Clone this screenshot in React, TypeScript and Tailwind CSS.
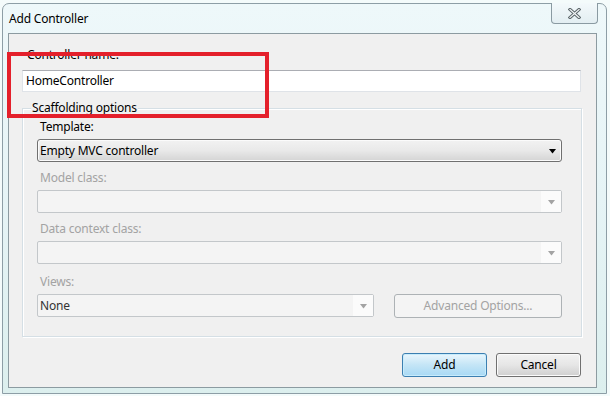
import React from "react";

function Arrow({ color }: { color: string }) {
  return (
    <svg width="7" height="5" viewBox="0 0 7 5">
      <path d="M0 0 H7 L3.5 4.5 Z" fill={color} />
    </svg>
  );
}

function EnabledCombo({ text, w }: { text: string; w: string }) {
  return (
    <div
      className={`${w} h-[23px] rounded-[3px] border border-[#707070] bg-linear-to-b from-[#f2f2f2] via-[#e9e9e9] to-[#d4d4d4] flex items-center shadow-[inset_0_0_0_1px_#fbfbfb]`}
    >
      <span className="pl-[2px] flex-1 text-black">{text}</span>
      <div className="w-[18px] flex items-center justify-center pt-[1px]">
        <Arrow color="#000" />
      </div>
    </div>
  );
}

function DisabledCombo({ text, w }: { text?: string; w: string }) {
  return (
    <div
      className={`${w} h-[23px] rounded-[2px] border border-[#c3c7ca] bg-[#f4f4f4] flex items-stretch`}
    >
      <span className="pl-[2px] flex-1 flex items-center text-[#333]">{text}</span>
      <div className="w-[20px] bg-[#fbfbfb] flex items-center justify-center pt-[1px]">
        <Arrow color="#a3a3a3" />
      </div>
    </div>
  );
}

export default function App() {
  return (
    <div className="relative w-[610px] h-[396px] bg-[#f4fbfb] overflow-hidden font-['Noto_Sans',sans-serif] text-[12px] leading-[16px] tracking-[-0.2px] text-black">
      {/* window */}
      <div className="relative ml-[2px] mt-[3px] w-[605px] h-[391px] rounded-t-[7px] border border-[#8d9ea6] bg-linear-to-b from-[#eef8fa] via-[#e6f4f6] to-[#dcefee] flex flex-col">
        {/* close button */}
        <div className="absolute right-[8px] top-[-1px] w-[47px] h-[21px] rounded-b-[4px] border border-[#8a9aa2] border-t-0 bg-linear-to-b from-[#f3f9fb] to-[#e3eef2] flex items-center justify-center">
          <svg width="13" height="11" viewBox="0 0 13 11">
            <path d="M2 1.5 L11 9.5 M11 1.5 L2 9.5" stroke="#5b6569" strokeWidth="3.2" strokeLinecap="square" />
            <path d="M2 1.5 L11 9.5 M11 1.5 L2 9.5" stroke="#f4f7f8" strokeWidth="1.2" strokeLinecap="square" />
          </svg>
        </div>
        {/* title */}
        <div className="h-[29px] pl-[6px] pt-[7px] text-black">Add Controller</div>
        {/* client area */}
        <div className="ml-[5px] w-[589px] h-[355px] border border-[#8c9ba1] bg-[#f0f0f0] pl-[13px] pt-[13px] flex flex-col">
          <div className="h-[16px] pl-[5px]">Controller name:</div>
          <div className="mt-[7px] w-[559px] h-[22px] bg-white border border-[#dfe3e8] border-t-[#abadb3] flex items-center pl-[3px]">
            HomeController
          </div>
          {/* group box */}
          <div className="relative mt-[16px] w-[560px] h-[229px] border border-[#d5dfe5] shadow-[inset_1px_1px_0_#ffffff,1px_1px_0_#ffffff] pl-[14px] pt-[10px] flex flex-col">
            <div className="absolute left-[8px] top-[-9px] px-[1px] bg-[#f0f0f0] h-[16px]">Scaffolding options</div>
            <div className="h-[16px] pl-[3px]">Template:</div>
            <div className="mt-[4px]">
              <EnabledCombo text="Empty MVC controller" w="w-[525px]" />
            </div>
            <div className="mt-[8px] h-[16px] pl-[3px] text-[#a3a3a3]">Model class:</div>
            <div className="mt-[4px]">
              <DisabledCombo w="w-[525px]" />
            </div>
            <div className="mt-[8px] h-[16px] pl-[3px] text-[#a3a3a3]">Data context class:</div>
            <div className="mt-[4px]">
              <DisabledCombo w="w-[525px]" />
            </div>
            <div className="mt-[10px] h-[16px] pl-[3px] text-[#a3a3a3]">Views:</div>
            <div className="mt-[4px] flex gap-[20px]">
              <DisabledCombo text="None" w="w-[337px]" />
              <div className="w-[168px] h-[24px] rounded-[3px] border border-[#adb2b5] bg-[#f4f4f4] flex items-center justify-center text-[#a3a3a3]">
                Advanced Options...
              </div>
            </div>
          </div>
          {/* buttons */}
          <div className="mt-[16px] w-[559px] flex justify-end gap-[9px]">
            <div className="w-[85px] h-[24px] rounded-[3px] border border-[#3c7fb1] bg-linear-to-b from-[#eaf6fd] via-[#c4e5f6] to-[#a7d9f5] shadow-[inset_0_0_0_1px_#c8ecfc] flex items-center justify-center">
              Add
            </div>
            <div className="w-[85px] h-[24px] rounded-[3px] border border-[#707070] bg-linear-to-b from-[#f2f2f2] via-[#e6e6e6] to-[#cfcfcf] shadow-[inset_0_0_0_1px_#fbfbfb] flex items-center justify-center">
              Cancel
            </div>
          </div>
        </div>
      </div>
      {/* red highlight rectangle */}
      <div className="absolute left-[7px] top-[52px] w-[262px] h-[66px] border-[4px] border-[#e4202b]" />
    </div>
  );
}
